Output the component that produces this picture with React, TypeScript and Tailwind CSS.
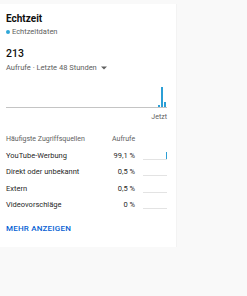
import React from "react";

const rows = [
  { name: "YouTube-Werbung", pct: "99,1 %", spike: true },
  { name: "Direkt oder unbekannt", pct: "0,5 %", spike: false },
  { name: "Extern", pct: "0,5 %", spike: false },
  { name: "Videovorschläge", pct: "0 %", spike: false },
];

export default function App() {
  return (
    <div className="w-[247px] h-[296px] bg-[#f9f9f9] pt-[4px]" style={{ fontFamily: "Roboto, 'Noto Sans', sans-serif" }}>
      <div className="w-[176px] h-[243px] bg-white shadow-[1px_0_0_#f3f3f3] pl-[6px] pr-[9px] pt-[8px] flex flex-col">
        <div className="text-[10px] font-bold leading-[13px] text-[#0f0f0f]">Echtzeit</div>
        <div className="flex items-center gap-[2px] mt-[2px] text-[7.5px] leading-[10px] text-[#606060]">
          <span className="w-[4px] h-[4px] rounded-full bg-[#2fa7d8] inline-block" />
          <span>Echtzeitdaten</span>
        </div>
        <div className="mt-[10px] text-[10.5px] font-medium leading-[13px] text-[#0f0f0f]">213</div>
        <div className="flex items-center gap-[4px] mt-[3px] text-[7.5px] leading-[10px] text-[#606060]">
          <span>Aufrufe · Letzte 48 Stunden</span>
          <svg width="6" height="4" viewBox="0 0 6 4"><path d="M0 0.5 L6 0.5 L3 3.5 Z" fill="#606060" /></svg>
        </div>
        <div className="relative mt-[10px] h-[25px] border-b border-[#c4c4c4]">
          <div className="absolute bottom-0 left-[152px] w-[1.5px] h-[2px] bg-[#2b9fd6]" />
          <div className="absolute bottom-0 left-[155px] w-[2px] h-[20px] bg-[#2b9fd6]" />
          <div className="absolute bottom-0 left-[158px] w-[1.5px] h-[5px] bg-[#2b9fd6]" />
        </div>
        <div className="flex justify-end mt-[4px] text-[7px] leading-[10px] text-[#606060]">Jetzt</div>
        <div className="flex mt-[12px] text-[7px] leading-[10px] text-[#606060]">
          <span className="w-[106px]">Häufigste Zugriffsquellen</span>
          <span>Aufrufe</span>
        </div>
        <div className="flex flex-col mt-[3px]">
          {rows.map((r) => (
            <div key={r.name} className="flex items-center h-[16.5px] text-[7.5px] text-[#1f1f1f]">
              <span className="flex-1">{r.name}</span>
              <span className="w-[30px] text-right">{r.pct}</span>
              <div className="relative ml-[8px] w-[24px] h-[9px] border-b border-[#e3e3e3]">
                {r.spike && <div className="absolute bottom-0 right-[0px] w-[1px] h-[7px] bg-[#2b9fd6]" />}
              </div>
            </div>
          ))}
        </div>
        <div className="mt-[10px] text-[8px] font-medium tracking-[0.2px] leading-[11px] text-[#065fd4]">MEHR ANZEIGEN</div>
      </div>
    </div>
  );
}
